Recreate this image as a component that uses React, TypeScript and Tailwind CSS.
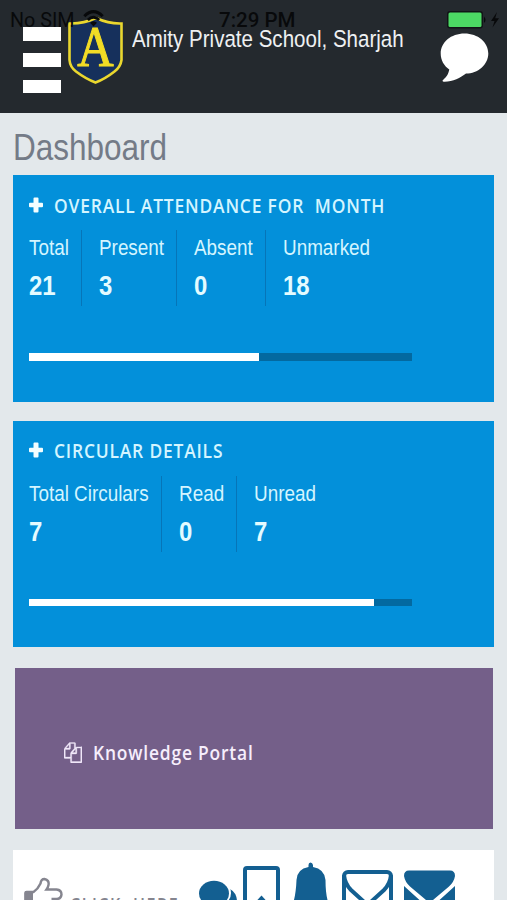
import type { ReactNode } from "react";
import { clsx } from "clsx";

interface Stat {
  label: string;
  value: number;
  width: string;
}

interface StatCardProps {
  title: string;
  stats: Stat[];
  /** Filled part of the bar, 0..100. */
  progress: number;
  className?: string;
}

const attendance: Stat[] = [
  { label: "Total", value: 21, width: "w-[53px]" },
  { label: "Present", value: 3, width: "w-[95px]" },
  { label: "Absent", value: 0, width: "w-[89px]" },
  { label: "Unmarked", value: 18, width: "w-[120px]" },
];

const circulars: Stat[] = [
  { label: "Total Circulars", value: 7, width: "w-[133px]" },
  { label: "Read", value: 0, width: "w-[75px]" },
  { label: "Unread", value: 7, width: "w-[120px]" },
];

/** Single line of slightly condensed text. */
function Line({ className, children }: { className?: string; children: ReactNode }) {
  return <div className={clsx("origin-left whitespace-pre", className)}>{children}</div>;
}

function StatusBar() {
  return (
    <div className="absolute inset-x-0 top-0 z-10 h-10 text-[#08090b]">
      <div className="absolute left-[10px] top-[11px] origin-left scale-x-[0.94] whitespace-pre font-['Roboto',sans-serif] text-[21px] leading-[19px]">
        No SIM
      </div>
      <svg className="absolute left-[83px] top-[10px] h-[17px] w-[21px]" viewBox="0 0 21 17" fill="none" stroke="currentColor">
        <path d="M1.3 6.2Q10.5 -2.8 19.7 6.2" strokeWidth="3" />
        <path d="M4.8 10Q10.5 4.4 16.2 10" strokeWidth="2.8" />
        <path d="M10.5 16.6L7 12.8Q10.5 9.8 14 12.8Z" fill="currentColor" stroke="none" />
      </svg>
      <div className="absolute left-[219px] top-[11px] origin-left whitespace-pre font-['Roboto',sans-serif] text-[20.5px] font-medium leading-[18px]">
        7:29 PM
      </div>
      <svg className="absolute left-[446px] top-[10px] h-[20px] w-[56px]" viewBox="0 0 56 20">
        <rect x="1" y="1" width="36" height="17.5" rx="3" fill="#111416" />
        <rect x="2.5" y="2.5" width="33" height="14.5" rx="1.5" fill="#4cd964" />
        <path d="M38 6.5q3 3.3 0 6.6z" fill="currentColor" />
        <path d="M51 2L45 11h3.5L46.5 17.5 53 8.2h-3.8z" fill="currentColor" />
      </svg>
    </div>
  );
}

function Crest() {
  return (
    <svg className="ml-[7px] mt-[15px] h-[70px] w-[56px] shrink-0" viewBox="0 0 56 70">
      <path
        d="M28 3Q15 9 1.500 8.500V45Q2 52 8 56.500Q18 64 27.500 67.500Q37 64 46.500 56.500Q52.500 52 53.500 45V8.500Q41 9 28 3Z"
        fill="#16305c"
        stroke="#ead72e"
        strokeWidth="2.6"
      />
      <text
        x="30.500"
        y="51"
        textAnchor="middle"
        transform="scale(0.9 1)"
        fontFamily="Liberation Serif, serif"
        fontSize="56"
        fill="#f2dc25"
        stroke="#f2dc25"
        strokeWidth="1"
      >
        A
      </text>
    </svg>
  );
}

function Header() {
  return (
    <header className="flex h-[113px] shrink-0 bg-[#24292e]">
      <button className="ml-[22.500px] mt-[27px] flex h-[66px] w-[38.500px] shrink-0 flex-col justify-between" aria-label="Menu">
        <span className="h-[13.500px] w-full bg-white" />
        <span className="h-[13.500px] w-full bg-white" />
        <span className="h-[13.500px] w-full bg-white" />
      </button>
      <Crest />
      <div className="ml-[8px] mt-[29px] w-[290px] shrink-0">
        <Line className="scale-x-[0.867] text-[23.7px] leading-[20px] text-[#eef0f2]">
          Amity Private School, Sharjah
        </Line>
      </div>
      <svg className="ml-[18px] mt-[33px] h-[50px] w-[50px] shrink-0" viewBox="0 0 50 50" fill="#fff">
        <path d="M24.500 0.500C38 0.500 48.300 9.300 48.300 20.500S38 40.600 26 40.600C20.500 45 13 48.600 4.500 48.800C2 48.600 2.200 47.500 3.500 46.500C7 43.500 8.500 40.500 9.300 36.500C4 33 0.700 27 0.700 20.500C0.700 9.300 11 0.500 24.500 0.500Z" />
      </svg>
    </header>
  );
}

function StatCard({ title, stats, progress, className }: StatCardProps) {
  return (
    <section className={clsx("ml-[13px] w-[481px] shrink-0 bg-[#0390da] px-4", className)}>
      <div className="flex h-[55px] items-center pt-[4px]">
        <svg className="h-[16px] w-[14px]" viewBox="0 0 14 16" fill="#f4feff">
          <path d="M5.500 0.500h3q1 0 1 1V5.700h3.500q1 0 1 1v2.600q0 1-1 1H9.500v4.200q0 1-1 1H5.500q-1 0-1-1v-4.200H1q-1 0-1-1V6.700q0-1 1-1h3.500V1.500q0-1 1-1z" />
        </svg>
        <Line className="ml-[11px] scale-x-[0.85] font-['Open_Sans',sans-serif] text-[20.5px] font-semibold leading-7 tracking-[0.95px] text-[#d4f5ff]">
          {title}
        </Line>
      </div>
      <div className="flex h-[76px]">
        {stats.map((stat, i) => (
          <div
            key={stat.label}
            className={clsx("shrink-0", stat.width, i > 0 && "pl-[17px]", i < stats.length - 1 && "border-r border-[#0675b8]")}
          >
            <Line className="mt-[5px] scale-x-[0.858] text-[22px] leading-[26px] text-[#d4f5ff]">{stat.label}</Line>
            <Line className="mt-[7px] scale-x-[0.84] text-[28.5px] font-bold leading-[34px] text-[#e4fbff]">
              {stat.value}
            </Line>
          </div>
        ))}
      </div>
      <div className="mt-[47px] h-[7.500px] w-[383px] bg-[#0369a0]">
        <div className="h-full bg-white" style={{ width: `${progress}%` }} />
      </div>
    </section>
  );
}

function KnowledgePortal() {
  return (
    <section className="ml-[15px] mt-[21px] flex h-[161px] w-[478px] shrink-0 items-center bg-[#745f89] pl-[49px] pt-[7px]">
      <svg className="h-[21px] w-[18px]" viewBox="0 0 1792 1792" preserveAspectRatio="none" fill="#f1e8fa" stroke="#f1e8fa" strokeWidth="30">
        <path d="M1696 384q40 0 68 28t28 68v1216q0 40-28 68t-68 28H736q-40 0-68-28t-28-68v-288H96q-40 0-68-28t-28-68V672q0-40 20-88t48-76L476 100q28-28 76-48t88-20h416q40 0 68 28t28 68v328q68-40 128-40h416zm-544 213L853 896h299V597zM512 213L213 512h299V213zm196 647l316-316V128H640v416q0 40-28 68t-68 28H128v640h512v-256q0-40 20-88t48-76zm956 804V512h-384v416q0 40-28 68t-68 28H768v640h896z" />
      </svg>
      <Line className="ml-[11px] scale-x-[0.85] font-['Open_Sans',sans-serif] text-[20.5px] font-semibold leading-7 tracking-[0.95px] text-[#f6eefc]">
        Knowledge Portal
      </Line>
    </section>
  );
}

function ClickHere() {
  return (
    <section className="ml-[13px] mt-[21px] flex h-[100px] w-[481px] shrink-0 bg-white">
      <svg className="ml-[11px] mt-[27px] h-[48px] w-[40px] shrink-0" viewBox="0 0 40 48">
        <path d="M0.500 16q0-2 2-2H9v29H0.500z" fill="#85858f" />
        <path
          d="M1.500 43V16q0-1 1-1H9.500Q14 12 16.500 6.500Q17 2 20.500 2Q25.500 3 24.500 8Q24 10.500 22.500 12.500H32.500Q37.500 13 37.500 17.500Q37 22 32.500 22H27.500M33 22v20H10"
          fill="none"
          stroke="#85858f"
          strokeWidth="2.4"
        />
      </svg>
      <div className="ml-[6px] mt-[41px] w-[123px] shrink-0">
        <Line className="scale-x-[0.8] font-['Open_Sans',sans-serif] text-[20px] font-semibold leading-7 tracking-[1.9px] text-[#85858f]">
          {"CLICK  HERE"}
        </Line>
      </div>
      <div className="flex shrink-0 items-start text-[#135f91]">
        {/* speech bubbles */}
        <svg className="ml-[6px] mt-[30px] h-[40px] w-[40px]" viewBox="0 0 40 40" fill="currentColor">
          <path d="M31 9Q38 13 38 22Q37 30 29 33Q20 34 14 30Z" />
          <ellipse cx="15.500" cy="13" rx="16.500" ry="14" fill="#fff" />
          <ellipse cx="15" cy="13.500" rx="15" ry="12.700" />
        </svg>
        {/* bookmark page */}
        <svg className="ml-[4px] mt-[16px] h-[50px] w-[37px]" viewBox="0 0 37 50">
          <rect x="2" y="2" width="33" height="60" rx="2" fill="none" stroke="currentColor" strokeWidth="4" />
          <path d="M18.500 29.500L29 41H8z" fill="currentColor" />
        </svg>
        {/* bell */}
        <svg className="ml-[12px] mt-[12px] h-[60px] w-[40px]" viewBox="0 0 40 60" fill="currentColor">
          <path d="M16.500 5V3Q16.500 0.500 18.500 0.500T21 3V5Q32.500 7 33.500 18Q33.500 30 35.500 38L40 44H-1L2 38Q4 30 4.500 18Q5 7 16.500 5Z" />
        </svg>
        {/* outlined envelope */}
        <svg className="ml-[10px] mt-[20px] h-[56px] w-[51px]" viewBox="0 0 51 56" fill="none" stroke="currentColor" strokeWidth="4">
          <rect x="2" y="2" width="47" height="52" rx="4" />
          <path d="M2 5Q3 14 9 20L25.500 35L42 20Q48 14 49 5" />
        </svg>
        {/* filled envelope */}
        <svg className="ml-[11px] mt-[20px] h-[56px] w-[51px]" viewBox="0 0 51 56" fill="currentColor">
          <path d="M5 0.500H46Q51 0.500 51 6Q50 12 45 16.500L29 30Q25.500 33 22 30L6 16.500Q1 12 0 6Q0 0.500 5 0.500Z" />
          <path d="M0 16L21 35Q25.500 38 30 35L51 16V50Q51 55 46 55H5Q0 55 0 50Z" />
        </svg>
      </div>
    </section>
  );
}

export default function App() {
  return (
    <div className="relative flex h-[900px] w-[507px] flex-col overflow-hidden bg-[#e3e8eb] font-['Liberation_Sans',Arial,sans-serif]">
      <StatusBar />
      <Header />
      <h1 className="ml-[13px] flex h-[62px] shrink-0 items-center pt-[7px]">
        <Line className="scale-x-[0.875] text-[36px] leading-[42px] text-[#747b87]">Dashboard</Line>
      </h1>
      <StatCard title="OVERALL ATTENDANCE FOR  MONTH" stats={attendance} progress={60} className="h-[227px]" />
      <StatCard title="CIRCULAR DETAILS" stats={circulars} progress={90} className="mt-[18.500px] h-[226.500px]" />
      <KnowledgePortal />
      <ClickHere />
    </div>
  );
}
